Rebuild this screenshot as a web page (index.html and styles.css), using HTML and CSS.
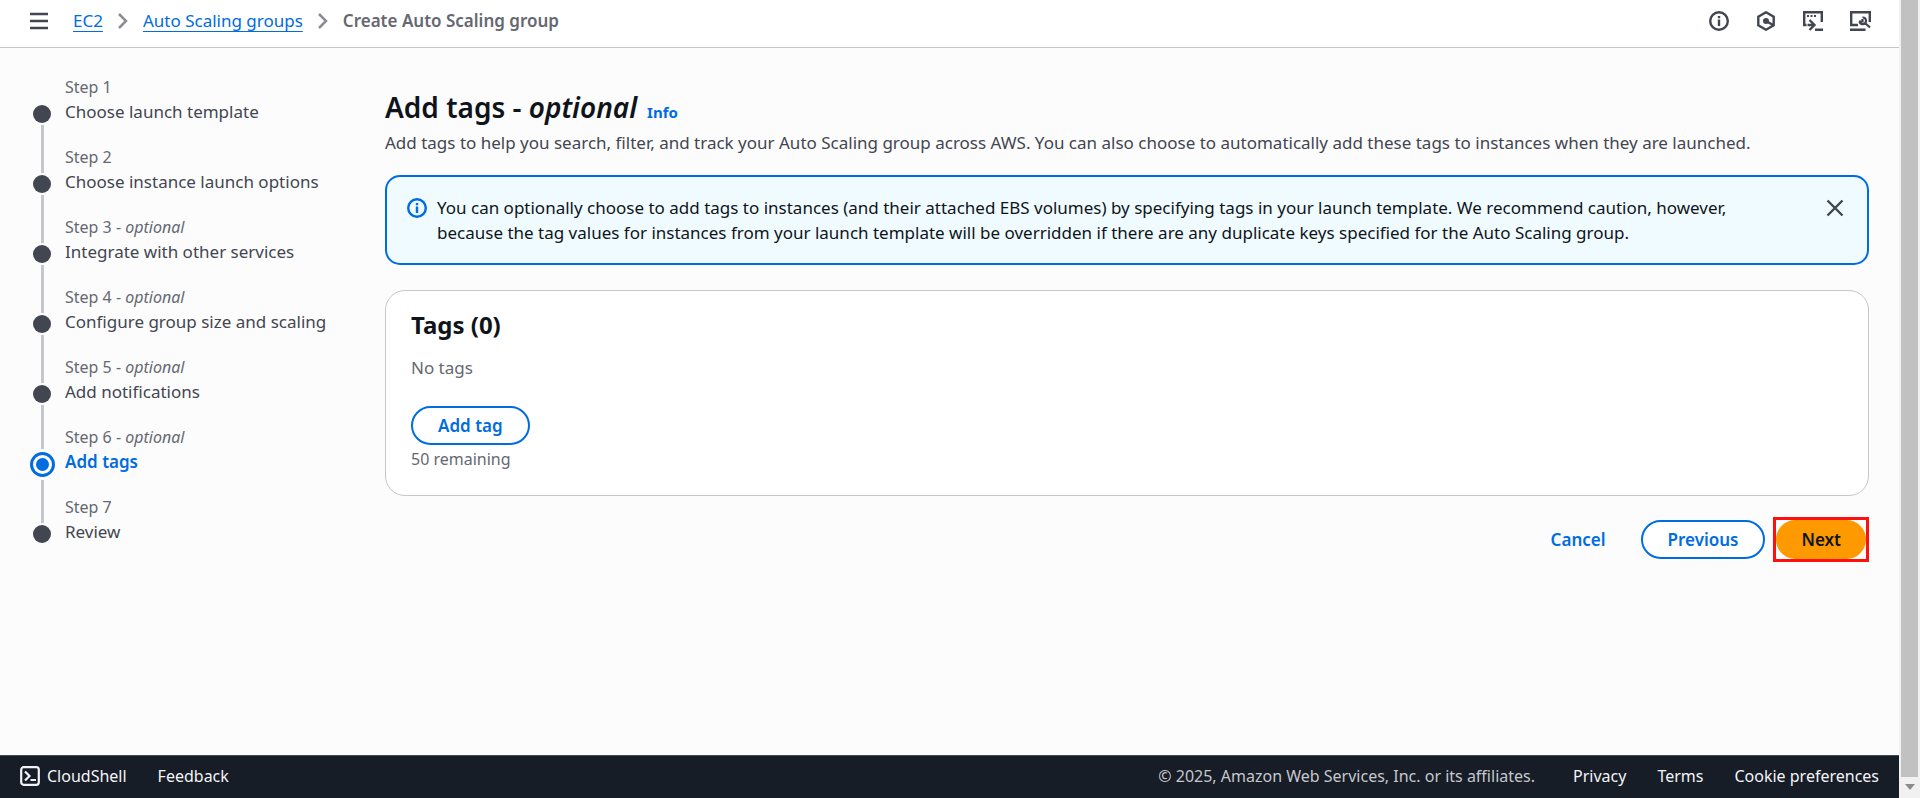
FILE: index.html
```html
<!DOCTYPE html>
<html lang="en">
<head>
<meta charset="utf-8">
<title>Create Auto Scaling group</title>
<link rel="stylesheet" href="styles.css">
</head>
<body>
<div class="app">
<div class="page">
  <header class="topbar">
    <button class="icon-button" aria-label="Open navigation"><svg width="18" height="18" viewBox="0 0 18 18"><path d="M0 2h18M0 9h18M0 16h18" stroke-width="2.5"/></svg></button>
    <nav class="crumbs" aria-label="Breadcrumbs">
      <a href="#">EC2</a>
      <svg width="10" height="18" viewBox="0 0 10 18"><path d="M1 2l7 7-7 7" stroke-width="2.5"/></svg>
      <a href="#">Auto Scaling groups</a>
      <svg width="10" height="18" viewBox="0 0 10 18"><path d="M1 2l7 7-7 7" stroke-width="2.5"/></svg>
      <span class="current">Create Auto Scaling group</span>
    </nav>
    <div class="tools">
      <button class="icon-button" aria-label="Info"><svg width="20" height="20" viewBox="0 0 20 20"><circle cx="10" cy="10" r="8.8" stroke-width="2.4"/><path d="M10 8.5V15M10 5v2.2" stroke-width="2.4"/></svg></button>
      <button class="icon-button" aria-label="Resources"><svg width="20" height="20" viewBox="0 0 20 20"><path d="M10 1.3l7.7 4.300v8.800L10 18.700l-7.700-4.300V5.600z" stroke-width="2.4"/><circle class="fill" cx="10" cy="10" r="3"/><path d="M10 10l7 4" stroke-width="2.4"/></svg></button>
      <button class="icon-button" aria-label="Tutorials"><svg width="20" height="20" viewBox="0 0 20 20"><path d="M3.500 14H1.200V1.200h17.600V11M12 18.800h8M4.500 14h6.500M6.500 9l5 5-5 5" stroke-width="2.4"/><path d="M4 5h2M7.500 5h2M11 5h2" stroke-width="2"/></svg></button>
      <button class="icon-button" aria-label="Console tools"><svg width="21" height="20" viewBox="0 0 21 20"><path d="M8 14H1.200V1.200h18.600V11M0 18.800h15.500" stroke-width="2.4"/><path d="M9.500 10.500a3.300 3.300 0 1 0 3-4M9 10.500h3.500V8M15 12l5 4.500" stroke-width="2.200"/></svg></button>
    </div>
  </header>

  <div class="body">
    <ol class="steps">
      <li class="step"><span class="step-no">Step 1</span><a class="step-name" href="#">Choose launch template</a></li>
      <li class="step"><span class="step-no">Step 2</span><a class="step-name" href="#">Choose instance launch options</a></li>
      <li class="step"><span class="step-no">Step 3 - <i>optional</i></span><a class="step-name" href="#">Integrate with other services</a></li>
      <li class="step"><span class="step-no">Step 4 - <i>optional</i></span><a class="step-name" href="#">Configure group size and scaling</a></li>
      <li class="step"><span class="step-no">Step 5 - <i>optional</i></span><a class="step-name" href="#">Add notifications</a></li>
      <li class="step active"><span class="step-no">Step 6 - <i>optional</i></span><a class="step-name" href="#" aria-current="step">Add tags</a></li>
      <li class="step"><span class="step-no">Step 7</span><a class="step-name" href="#">Review</a></li>
    </ol>

    <main class="content">
      <div class="heading"><h1>Add tags - <i>optional</i></h1><a class="info" href="#">Info</a></div>
      <p class="description">Add tags to help you search, filter, and track your Auto Scaling group across AWS. You can also choose to automatically add these tags to instances when they are launched.</p>

      <div class="alert" role="status">
        <svg class="alert-icon" width="20" height="20" viewBox="0 0 20 20"><circle cx="10" cy="10" r="8.800" stroke-width="2.400"/><path d="M10 8.500V15M10 5v2.200" stroke-width="2.400"/></svg>
        <p>You can optionally choose to add tags to instances (and their attached EBS volumes) by specifying tags in your launch template. We recommend caution, however, because the tag values for instances from your launch template will be overridden if there are any duplicate keys specified for the Auto Scaling group.</p>
        <button class="icon-button close" aria-label="Dismiss"><svg width="18" height="18" viewBox="0 0 18 18"><path d="M1.500 1.500l15 15M16.500 1.500l-15 15" stroke-width="2.400"/></svg></button>
      </div>

      <section class="card">
        <h2>Tags (0)</h2>
        <p class="empty">No tags</p>
        <button class="button">Add tag</button>
        <p class="hint">50 remaining</p>
      </section>

      <div class="actions">
        <button class="button link">Cancel</button>
        <button class="button">Previous</button>
        <span class="highlight"><button class="button primary">Next</button></span>
      </div>
    </main>
  </div>

  <footer class="footer">
    <button class="footer-item shell"><svg width="20" height="20" viewBox="0 0 20 20"><rect x="1.200" y="1.200" width="17.600" height="17.600" rx="2.500" stroke-width="2.200"/><path d="M5 5.500l4.500 4.500L5 14.500M10.500 14H16" stroke-width="2.200"/></svg>CloudShell</button>
    <a class="footer-item" href="#">Feedback</a>
    <span class="copyright">© 2025, Amazon Web Services, Inc. or its affiliates.</span>
    <a class="footer-item" href="#">Privacy</a>
    <a class="footer-item" href="#">Terms</a>
    <button class="footer-item">Cookie preferences</button>
  </footer>
</div>
<div class="scrollbar" aria-hidden="true"><div class="thumb"></div><svg width="10" height="6" viewBox="0 0 10 6"><path d="M0 0h10L5 6z"/></svg></div>
</div>
</body>
</html>
```
FILE: styles.css
```css
*, *::before, *::after { box-sizing: border-box; }
body, h1, h2, p, ol { margin: 0; padding: 0; }
body { font: 17px/25px "Noto Sans", sans-serif; color: #0f141a; background: #fcfcfd; }
button { font: inherit; cursor: pointer; }
a { color: #006ce0; text-decoration: none; }
svg { display: block; flex: none; fill: none; stroke: currentColor; }
.fill { fill: currentColor; stroke: none; }

.app { display: flex; min-height: 100vh; }
.page { flex: 1; min-width: 0; display: flex; flex-direction: column; }

.topbar { display: flex; align-items: center; height: 48px; padding: 0 28px 6px 30px; background: #fff; border-bottom: 1px solid #c6c6cd; }
.icon-button { padding: 0; border: 0; background: none; color: #424650; }
.crumbs { display: flex; align-items: center; gap: 15px; margin-left: 25px; color: #8c8c94; }
.crumbs a { text-decoration: underline; text-underline-offset: 4px; }
.current { color: #656871; font-weight: 600; }
.tools { display: flex; gap: 27px; margin-left: auto; }

.body { flex: 1; display: flex; }
.steps { width: 385px; flex: none; padding: 27px 20px 20px 30px; list-style: none; }
.step { position: relative; display: flex; flex-direction: column; height: 70px; padding-left: 35px; }
.step-no { font-size: 16px; color: #656871; }
.step-name { line-height: 23px; color: #424650; }
.step::before { content: ""; position: absolute; left: 3px; top: 30px; width: 18px; height: 18px; border-radius: 50%; background: #424650; }
.step:not(:last-child)::after { content: ""; position: absolute; left: 11px; top: 50px; width: 3px; height: 48px; background: #c6c6cd; }
.step.active .step-name { color: #006ce0; font-weight: 600; }
.step.active::before { left: 0; top: 27px; width: 25px; height: 25px; border: 3px solid #006ce0; background: #006ce0; background-clip: content-box; padding: 3px; }
.step.active::after { top: 55px; height: 43px; }
.step:has(+ .active)::after { height: 44px; }

.content { flex: 1; min-width: 0; padding: 40px 30px 40px 0; }
.heading { display: flex; align-items: baseline; gap: 10px; }
h1 { font-size: 28px; line-height: 38px; font-weight: 600; }
.info { font-size: 15px; font-weight: 700; }
.description { margin-top: 4px; color: #424650; }
.alert { display: flex; gap: 10px; margin-top: 20px; padding: 18px 23px 18px 20px; border: 2px solid #006ce0; border-radius: 15px; background: #f0fbff; }
.alert p { flex: 1; padding-right: 70px; }
.alert-icon { color: #006ce0; margin-top: 3px; }
.close { align-self: flex-start; padding-top: 4px; }
.card { margin-top: 25px; padding: 19px 25px 23px; border: 1px solid #c6c6cd; border-radius: 20px; background: #fff; }
h2 { font-size: 24px; line-height: 30px; font-weight: 700; }
.empty { margin: 15px 0 26px; color: #656871; }
.hint { font-size: 16px; margin-top: 2px; color: #656871; }
.button { height: 39px; padding: 0 25px; border: 2px solid #006ce0; border-radius: 20px; background: #fff; color: #006ce0; font-weight: 600; }
.link { border-color: transparent; background: none; }
.primary { border: 0; background: #ff9900; color: #0f141a; }
.actions { display: flex; justify-content: flex-end; align-items: center; gap: 8px; margin-top: 21px; }
.highlight { display: flex; border: 3px solid #ff1010; background: #fff; }

.footer { display: flex; align-items: center; height: 43px; padding: 0 20px 2px; border-top: 1px solid #424650; background: #161d26; font-size: 16px; }
.footer-item { display: flex; align-items: center; gap: 7px; padding: 0; border: 0; background: none; color: #f3f3f7; margin-right: 31px; }
.footer-item:last-child { margin-right: 0; }
.copyright { margin: 0 38px 0 auto; color: #c6c6cd; }

.scrollbar { flex: none; width: 21px; display: flex; flex-direction: column; align-items: center; background: #f1f1f1; padding-bottom: 8px; }
.thumb { flex: 1; width: 17px; background: #c1c1c1; margin-bottom: 7px; }
.scrollbar svg { fill: #8c8c8c; stroke: none; }
```
